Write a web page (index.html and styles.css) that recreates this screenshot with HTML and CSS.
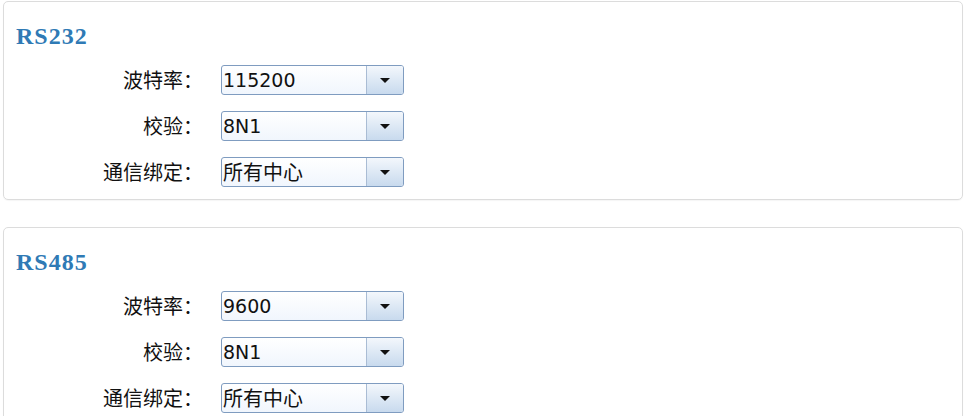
FILE: index.html
```html
<!DOCTYPE html>
<html lang="zh-CN">
<head>
  <meta charset="UTF-8" />
  <title>串口设置</title>
  <link rel="stylesheet" href="styles.css">
</head>
<body>

  <div class="panel">
    <h2 class="panel-title">RS232</h2>
    <div class="form">
      <label>波特率：</label>
      <div class="combo"><span class="combo-value num">115200</span><span class="combo-btn"><i class="arrow"></i></span></div>
      <label>校验：</label>
      <div class="combo"><span class="combo-value num">8N1</span><span class="combo-btn"><i class="arrow"></i></span></div>
      <label>通信绑定：</label>
      <div class="combo"><span class="combo-value">所有中心</span><span class="combo-btn"><i class="arrow"></i></span></div>
    </div>
  </div>

  <div class="panel">
    <h2 class="panel-title">RS485</h2>
    <div class="form">
      <label>波特率：</label>
      <div class="combo"><span class="combo-value num">9600</span><span class="combo-btn"><i class="arrow"></i></span></div>
      <label>校验：</label>
      <div class="combo"><span class="combo-value num">8N1</span><span class="combo-btn"><i class="arrow"></i></span></div>
      <label>通信绑定：</label>
      <div class="combo"><span class="combo-value">所有中心</span><span class="combo-btn"><i class="arrow"></i></span></div>
    </div>
  </div>

</body>
</html>
```

FILE: styles.css
```css
body {
  margin: 0;
  padding: 1px 4px 0 3px;
  background: #fff;
  font-family: "Noto Sans CJK SC", sans-serif;
  color: #111;
}
.panel {
  border: 1px solid #dcdcdc;
  border-radius: 5px;
  padding: 22px 0 12px 12px;
  margin-bottom: 27px;
  box-shadow: 0 1px 1px rgba(0,0,0,0.04);
}
.panel-title {
  margin: 0 0 17px 0;
  font-family: "Liberation Serif", serif;
  font-weight: bold;
  font-size: 24px;
  line-height: 24px;
  letter-spacing: 1px;
  color: #2f7ab5;
}
.form {
  display: grid;
  grid-template-columns: 187px 183px;
  column-gap: 18px;
  row-gap: 16px;
  align-items: center;
}
.form label {
  text-align: right;
  font-size: 20px;
  line-height: 30px;
  white-space: nowrap;
}
.combo {
  display: flex;
  height: 30px;
  box-sizing: border-box;
  border: 1px solid #7f9cc0;
  border-radius: 3px;
  background: linear-gradient(#ffffff, #f1f6fd);
  overflow: hidden;
}
.combo-value {
  flex: 1;
  padding-left: 1px;
  font-size: 20px;
  line-height: 28px;
  color: #111;
}
.combo-value.num {
  font-family: "DejaVu Sans", sans-serif;
  font-size: 19px;
}
.combo-btn {
  width: 36px;
  border-left: 1px solid #a9bcd4;
  background: linear-gradient(#f3f7fc, #c8daee);
  display: flex;
  align-items: center;
  justify-content: center;
}
.arrow {
  width: 0;
  height: 0;
  border-left: 5px solid transparent;
  border-right: 5px solid transparent;
  border-top: 5px solid #111;
}
```
